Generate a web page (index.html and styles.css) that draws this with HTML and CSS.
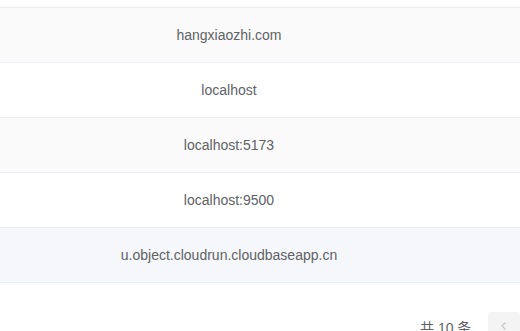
FILE: index.html
```html
<!DOCTYPE html>
<html>
<head>
<meta charset="utf-8">
<link rel="stylesheet" href="styles.css">
</head>
<body>
<div class="table">
  <div class="row top"></div>
  <div class="row striped"><div class="cell">hangxiaozhi.com</div></div>
  <div class="row"><div class="cell">localhost</div></div>
  <div class="row striped"><div class="cell">localhost:5173</div></div>
  <div class="row"><div class="cell">localhost:9500</div></div>
  <div class="row hover"><div class="cell">u.object.cloudrun.cloudbaseapp.cn</div></div>
</div>
<div class="pagination">
  <span class="total">共 10 条</span>
  <button class="btn-prev"><svg width="12" height="12" viewBox="0 0 12 12"><path d="M7.5 2.5 L4 6 L7.5 9.5" fill="none" stroke="#c0c4cc" stroke-width="1.1"/></svg></button>
</div>
</body>
</html>
```
FILE: styles.css
```css
html, body {
  margin: 0;
  padding: 0;
  background: #ffffff;
  overflow: hidden;
  width: 520px;
  height: 331px;
}
body {
  font-family: "Liberation Sans", Arial, "Noto Sans CJK SC", sans-serif;
  color: #606266;
  font-size: 14px;
}
.table {
  display: flex;
  flex-direction: column;
}
.row {
  height: 54px;
  border-bottom: 1px solid #ebeef5;
  background: #ffffff;
  display: flex;
  align-items: center;
}
.row.top {
  height: 7px;
}
.row.striped {
  background: #fafafa;
}
.row.hover {
  background: #f5f7fa;
}
.cell {
  width: 458px;
  line-height: 23px;
  text-align: center;
}
.pagination {
  display: flex;
  align-items: flex-start;
  margin-top: 29px;
  padding-left: 420px;
  white-space: nowrap;
  height: 28px;
}
.total {
  font-family: "Liberation Sans", "Noto Sans CJK SC", sans-serif;
  font-size: 14px;
  line-height: 28px;
  padding-top: 2px;
  color: #606266;
  margin-right: 12px;
}
.btn-prev {
  flex: 0 0 auto;
  width: 32px;
  height: 28px;
  margin: 0 5px;
  padding: 0;
  border: none;
  border-radius: 3px;
  background: #f4f4f5;
  display: flex;
  align-items: center;
  justify-content: center;
}
```
